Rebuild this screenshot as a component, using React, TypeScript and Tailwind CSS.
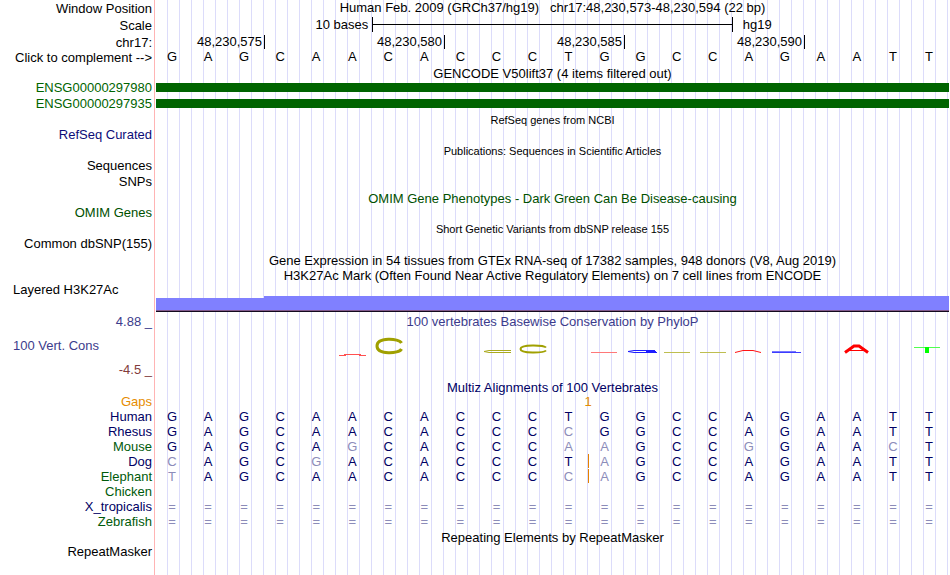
import { useState } from 'react';
import type { ReactNode } from 'react';

const SEQUENCE = 'GAGCAACACCCTGGCCAGAATT';

const COMPLEMENT: Record<string, string> = { A: 'T', T: 'A', G: 'C', C: 'G' };

const SPECIES = [
  { name: 'Human', color: 'text-[#000064]', bases: 'GAGCAACACCCTGGCCAGAATT' },
  { name: 'Rhesus', color: 'text-[#000064]', bases: 'GAGCAACACCCCGGCCAGAATT' },
  { name: 'Mouse', color: 'text-[#005a0a]', bases: 'GAGCAGCACCCAAGCCGGAACT' },
  { name: 'Dog', color: 'text-[#000064]', bases: 'CAGCGACACCCTAGCCAGAATT', insertAt: 12 },
  { name: 'Elephant', color: 'text-[#005a0a]', bases: 'TAGCAACACCCCAGCCAGAATT', insertAt: 12 },
  { name: 'Chicken', color: 'text-[#005a0a]', bases: '' },
  { name: 'X_tropicalis', color: 'text-[#000064]', bases: '======================' },
  { name: 'Zebrafish', color: 'text-[#005a0a]', bases: '======================' },
];

type RowProps = {
  label?: ReactNode;
  labelColor?: string;
  labelPad?: string;
  height?: string;
  children?: ReactNode;
};

function Row({ label, labelColor = 'text-black', labelPad = 'pb-0.5', height = 'h-4', children }: RowProps) {
  return (
    <div className={`flex ${height}`}>
      <div
        className={`flex w-[155px] shrink-0 items-center justify-end whitespace-nowrap pr-[3px] ${labelPad} ${labelColor}`}
      >
        {label}
      </div>
      <div className="min-w-0 flex-1">{children}</div>
    </div>
  );
}

function Title({ children, small = false, color = 'text-black' }: { children: ReactNode; small?: boolean; color?: string }) {
  return (
    <h2 className={`flex h-full items-center justify-center whitespace-pre ${small ? 'text-[11px]' : ''} ${color}`}>
      {children}
    </h2>
  );
}

function Bases({ bases, insertAt }: { bases: string; insertAt?: number }) {
  return (
    <div className="-ml-px mr-[3px] grid grid-cols-[repeat(22,minmax(0,1fr))] text-center leading-[13px]">
      {bases.split('').map((base, i) => {
        const muted = base === '=' || base !== SEQUENCE[i];
        return (
          <span key={i} className={`relative ${muted ? 'text-[#8c8cb9]' : 'text-[#000064]'}`}>
            {base}
            {insertAt === i && <i className="absolute -top-px left-px h-3.5 w-px bg-[#e68200]" />}
          </span>
        );
      })}
    </div>
  );
}

function ConservationLogo() {
  return (
    <svg
      className="ml-px block h-6 w-[calc(100%-3px)]"
      viewBox="0 0 792 24"
      preserveAspectRatio="none"
      fill="none"
      aria-hidden="true"
    >
      <path d="M183 21.5 H190 M203 21.5 H210 M188 20.5 H205" stroke="#ff5050" />
      <path d="M245.5 9 C243 4 221 3 221 12 C221 21 243 20 245.5 15" stroke="#a0a000" strokeWidth="3" />
      <path d="M355 16.5 H333 L328 17.5 L333 18.5 H355" stroke="#aaaa1e" />
      <path d="M390 13.5 C388 11 364.5 10 364.5 15 C364.5 20 388 19 390 16.5" stroke="#a0a000" strokeWidth="2" />
      <path d="M435 18.5 H461" stroke="#ff7878" />
      <path d="M499 16.5 H478 L472 17.5 L478 18.5 H501 M490 17.5 H500" stroke="#1e1eff" />
      <path d="M508 18.5 H534 M544 18.5 H570" stroke="#bebe50" />
      <path d="M579 18.5 L587 16.5 H597 L605 18.5" stroke="#ff1414" />
      <path d="M616 17.5 H640" stroke="#7878ff" />
      <path d="M616 18.5 H645" stroke="#3c3cff" />
      <path d="M689 18.5 L698 12 H703 L712 18.5" stroke="#ff0000" strokeWidth="3" />
      <path d="M693 16.5 H708" stroke="#ff0000" />
      <path d="M758 13.5 H784" stroke="#50ff50" />
      <path d="M771 13 V19" stroke="#00ff00" strokeWidth="4" />
    </svg>
  );
}

export default function App() {
  const [reversed, setReversed] = useState(false);
  const bases = SEQUENCE.split('').map((b) => (reversed ? COMPLEMENT[b] : b));

  return (
    <main className="relative min-h-screen overflow-hidden bg-white font-['Liberation_Sans',Arial,sans-serif] text-[13px] leading-[15px]">
      {/* guide lines sit behind every track */}
      <div className="absolute inset-y-0 left-[154px] right-0 border-l border-[#ffb4b4] pl-px">
        <div className="h-full bg-[linear-gradient(to_right,transparent_11px,#dcdcfa_11px)] bg-[length:12px_100%]" />
      </div>

      <div className="relative">
        <Row label="Window Position" labelPad="pb-0" height="h-[17px]">
          <h1 className="flex items-center justify-center whitespace-pre">
            {'Human Feb. 2009 (GRCh37/hg19)   chr17:48,230,573-48,230,594 (22 bp)'}
          </h1>
        </Row>
        <Row label="Scale" labelPad="pb-0" height="h-[17px]">
          <div className="mx-px grid h-[15px] grid-cols-[repeat(22,minmax(0,1fr))] items-center">
            <span className="col-span-6 pr-1 text-right">10 bases</span>
            <div className="col-span-10 flex h-[15px] items-center border-x border-black">
              <div className="h-px w-full bg-black" />
            </div>
            <span className="col-span-6 pl-2.5">hg19</span>
          </div>
        </Row>
        <Row label="chr17:" labelPad="pb-0">
          <div className="ml-0.5 mr-px grid grid-cols-[repeat(22,minmax(0,1fr))] pt-px text-right leading-[14px]">
            <span className="col-span-3 border-r border-black pr-0.5">48,230,575</span>
            <span className="col-span-5 border-r border-black pr-0.5">48,230,580</span>
            <span className="col-span-5 border-r border-black pr-0.5">48,230,585</span>
            <span className="col-span-5 border-r border-black pr-0.5">48,230,590</span>
          </div>
        </Row>
        <Row
          label={
            <button type="button" onClick={() => setReversed(!reversed)}>
              {'Click to complement -->'}
            </button>
          }
        >
          <div className="-ml-px mr-[3px] grid grid-cols-[repeat(22,minmax(0,1fr))] text-center leading-[14px]">
            {bases.map((b, i) => (
              <span key={i}>{b}</span>
            ))}
          </div>
        </Row>

        <Row height="h-3.5">
          <Title>GENCODE V50lift37 (4 items filtered out)</Title>
        </Row>
        {['ENSG00000297980', 'ENSG00000297935'].map((gene) => (
          <Row key={gene} label={gene} labelColor="text-[#006400]">
            <div className="mx-px pt-[3px]">
              <div className="h-[9px] bg-[#006400]" />
            </div>
          </Row>
        ))}

        <Row>
          <Title small>RefSeq genes from NCBI</Title>
        </Row>
        <Row label="RefSeq Curated" labelColor="text-[#0c0c78]" height="h-[15px]" />
        <Row>
          <Title small>Publications: Sequences in Scientific Articles</Title>
        </Row>
        <Row label="Sequences" height="h-[15px]" />
        <Row label="SNPs" />
        <Row>
          <Title color="text-[#005000]">OMIM Gene Phenotypes - Dark Green Can Be Disease-causing</Title>
        </Row>
        <Row label="OMIM Genes" labelColor="text-[#005000]" height="h-[15px]" />
        <Row>
          <Title small>Short Genetic Variants from dbSNP release 155</Title>
        </Row>
        <Row label="Common dbSNP(155)" height="h-[15px]" />
        <Row>
          <Title>Gene Expression in 54 tissues from GTEx RNA-seq of 17382 samples, 948 donors (V8, Aug 2019)</Title>
        </Row>
        <Row height="h-[15px]">
          <Title>H3K27Ac Mark (Often Found Near Active Regulatory Elements) on 7 cell lines from ENCODE</Title>
        </Row>

        <Row
          label={<div className="h-full w-full pl-[13px] leading-[13px]">Layered H3K27Ac</div>}
          height="h-[29px]"
        >
          <div className="mx-px flex h-full flex-col justify-end">
            <div className="grid grid-cols-[repeat(22,minmax(0,1fr))] items-end">
              <div className="col-span-3 h-3 bg-[#8080ff]" />
              <div className="col-span-19 h-3.5 bg-[#8080ff]" />
            </div>
            <div className="h-px bg-[#825a8c]" />
            <div className="h-px bg-[#140a1e]" />
          </div>
        </Row>

        <Row
          label={
            <div className="flex h-full w-full flex-col justify-between pt-0.5">
              <span className="text-right">4.88 _</span>
              <span className="pl-[13px]">100 Vert. Cons</span>
              <span className="text-right text-[#823c3c]">-4.5 _</span>
            </div>
          }
          labelColor="text-[#3c3c8c]"
          height="h-[67px]"
        >
          <div className="h-[18px]">
            <Title color="text-[#3c3c8c]">100 vertebrates Basewise Conservation by PhyloP</Title>
          </div>
          <div className="pt-1">
            <ConservationLogo />
          </div>
        </Row>

        <Row>
          <Title color="text-[#000064]">Multiz Alignments of 100 Vertebrates</Title>
        </Row>
        <Row label="Gaps" labelColor="text-[#e68c00]" height="h-[15px]">
          <div className="ml-px mr-0.5 grid grid-cols-[repeat(22,minmax(0,1fr))] text-center leading-[13px] text-[#e68c00]">
            <span className="col-span-2 col-start-12">1</span>
          </div>
        </Row>
        {SPECIES.map((s) => (
          <Row key={s.name} label={s.name} labelColor={s.color} height="h-[15px]">
            <Bases bases={s.bases} insertAt={s.insertAt} />
          </Row>
        ))}

        <Row height="h-[15px]">
          <Title>Repeating Elements by RepeatMasker</Title>
        </Row>
        <Row label="RepeatMasker" height="h-[15px]" />
      </div>
    </main>
  );
}
